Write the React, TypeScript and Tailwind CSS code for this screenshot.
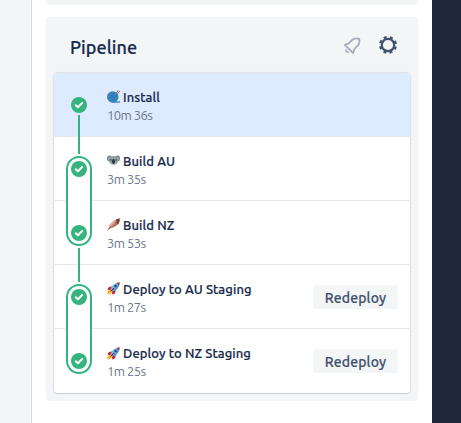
import React from 'react';

type EmojiName = 'yarn' | 'koala' | 'feather' | 'rocket';

function Emoji({ name }: { name: EmojiName }) {
  return (
    <svg viewBox="0 0 26 26" className="h-[13px] w-[13px] shrink-0">
      {name === 'yarn' && (
        <g fill="none" strokeLinecap="round">
          <path d="M17 9 22 1M19 10l6-7" stroke="#a9453f" strokeWidth="1.8" />
          <circle cx="11.5" cy="14" r="11.5" fill="#3b88c3" />
          <path d="M11 24h14" stroke="#3b88c3" strokeWidth="3" />
          <path d="M3 9c6 0 10 4 13 12M7 5c6 1 11 6 13 12M2 17c7-1 11-6 13-12M6 22C12 19 18 15 20 9" stroke="#226699" strokeWidth="1" />
        </g>
      )}
      {name === 'koala' && (
        <g>
          <ellipse cx="5" cy="9" rx="5" ry="6" fill="#78868f" />
          <ellipse cx="21" cy="9" rx="5" ry="6" fill="#78868f" />
          <ellipse cx="4.5" cy="9" rx="2.5" ry="3" fill="#99a4ab" />
          <ellipse cx="21.5" cy="9" rx="2.5" ry="3" fill="#99a4ab" />
          <ellipse cx="13" cy="13" rx="9" ry="9" fill="#909da5" />
          <path d="M8 18h10l-2 4h-6z" fill="#c4cbcf" />
          <ellipse cx="13" cy="15" rx="3" ry="5" fill="#29343b" />
          <circle cx="8" cy="12" r="1.3" fill="#29343b" />
          <circle cx="18" cy="12" r="1.3" fill="#29343b" />
        </g>
      )}
      {name === 'feather' && (
        <g>
          <path d="M3 22C3 12 14 4 25 1c1 10-7 17-19 20Z" fill="#b86d58" />
          <path d="M4 19C5 12 11 8 19 5 17 11 12 17 4 20Z" fill="#f2b9a3" />
          <path d="M1 25C7 16 13 11 22 5" fill="none" stroke="#7d4238" strokeWidth="1.3" />
          <path d="M18 3c3-1 5-2 7-2 1 6-1 10-4 13Z" fill="#793d32" />
        </g>
      )}
      {name === 'rocket' && (
        <g>
          <path d="M1 15c0-5 6-7 11-6l-4 8zM11 25c5 0 7-6 6-11l-8 4z" fill="#c62735" />
          <path d="m9 15-7 2-2 8 8-2 3-6z" fill="#f5b829" />
          <path d="M7 16C8 7 16 1 25 1c0 9-6 16-15 18z" fill="#79b8e8" />
          <path d="M25 1c0 9-6 16-15 18l-2-2z" fill="#5599d0" />
          <path d="M19 2c2-1 4-1 6-1 0 2 0 4-1 6z" fill="#b4323f" />
          <circle cx="17" cy="8" r="2.5" fill="#28496b" />
          <path d="m7 19 7-7" stroke="#a0041e" strokeWidth="2" />
        </g>
      )}
    </svg>
  );
}

function Check() {
  return (
    <svg viewBox="0 0 16 16" className="h-4 w-4 shrink-0">
      <circle cx="8" cy="8" r="8" fill="#36b37e" />
      <path d="m4.8 8.2 2.1 2L11.2 6" fill="none" stroke="#fff" strokeWidth="1.9" strokeLinecap="round" strokeLinejoin="round" />
    </svg>
  );
}

function Group() {
  return (
    <div className="flex h-[90px] w-[26px] flex-col items-center justify-between rounded-full border-2 border-[#36b37e] bg-white py-[3px]">
      <Check />
      <Check />
    </div>
  );
}

interface Step {
  icon: EmojiName;
  name: string;
  time: string;
  redeploy?: boolean;
}

const steps: Step[] = [
  { icon: 'yarn', name: 'Install', time: '10m 36s' },
  { icon: 'koala', name: 'Build AU', time: '3m 35s' },
  { icon: 'feather', name: 'Build NZ', time: '3m 53s' },
  { icon: 'rocket', name: 'Deploy to AU Staging', time: '1m 27s', redeploy: true },
  { icon: 'rocket', name: 'Deploy to NZ Staging', time: '1m 25s', redeploy: true },
];

export default function App() {
  return (
    <div className="flex h-[423px] w-[461px] overflow-hidden bg-white font-['Ubuntu','Noto_Sans',sans-serif]">
      <div className="w-8 shrink-0 border-r border-[#d7d9dd] bg-[#f4f5f7]" />
      <main className="w-[400px] shrink-0 px-3.5">
        <div className="h-[5px] rounded-b bg-[#f4f5f7]" />
        <section className="mt-3 h-96 rounded bg-[#f4f5f7] px-2">
          <header className="flex h-14 items-center pt-1 pr-[13px] pl-4">
            <h2 className="grow text-[18px] leading-6 font-medium tracking-[0.08px] text-[#172b4d] [-webkit-text-stroke:0.2px_#172b4d]">Pipeline</h2>
            <svg viewBox="0 0 18 18" className="mr-[18px] mb-1 h-[18px] w-[18px] fill-none stroke-[#a5adba]" strokeWidth="1.8" strokeLinecap="round" strokeLinejoin="round">
              <path d="M1.8 8.8 10.2 17 11.3 13.2 15.2 9.2C17 7 16.5 4.8 16.2 2.8 13.5 2 11 2.3 9.2 4L5.5 7.6Z" />
              <path d="M3 14.2c.1 1.3.7 1.9 2 2" />
            </svg>
            <svg viewBox="0 0 18 18" className="mb-1 h-[18px] w-[18px] fill-none stroke-[#42526e]">
              <circle cx="9" cy="9" r="6.2" strokeWidth="2.2" />
              <circle cx="9" cy="9" r="7.7" strokeWidth="2.6" strokeDasharray="3 3.048" strokeDashoffset="-1.52" />
            </svg>
          </header>
          <div className="relative h-80 rounded-[3px] bg-white shadow-[0_1px_1px_rgba(9,30,66,0.1),0_0_1px_1px_rgba(9,30,66,0.08)]">
            {steps.map((step, index) => (
              <div key={step.name} className={`flex h-16 items-center pr-3 pl-[53px] ${index === 0 ? 'rounded-t-[3px] bg-[#deebff]' : ''} ${index < 4 ? 'border-b border-[#e6e8ec]' : ''}`}>
                <div className="grow pt-[2px]">
                  <div className="flex h-[18px] items-center gap-[3px] text-[#172b4d]">
                    <Emoji name={step.icon} />
                    <span className="text-[13px] leading-[18px] font-medium tracking-[0.09px] whitespace-nowrap [-webkit-text-stroke:0.2px_#172b4d]">{step.name}</span>
                  </div>
                  <div className="h-[18px] text-[13px] leading-[18px] tracking-[-0.54px] text-[#6b778c]">{step.time}</div>
                </div>
                {step.redeploy && (
                  <button className={`h-6 w-[85px] shrink-0 rounded-[3px] bg-[#f4f5f7] pt-px text-[14px] leading-6 font-medium tracking-[0.15px] text-[#42526e] [-webkit-text-stroke:0.2px_#42526e] ${index === 3 ? 'mt-px' : 'mt-0'}`}>Redeploy</button>
                )}
              </div>
            ))}
            <div className="absolute top-6 left-3 flex w-[26px] flex-col items-center gap-0.5">
              <Check />
              <div className="h-[39px] w-0.5 bg-[#36b37e]" />
              <Group />
              <div className="h-[34px] w-0.5 bg-[#36b37e]" />
              <Group />
            </div>
          </div>
        </section>
      </main>
      <aside className="w-[29px] shrink-0 bg-[#1d2738]" />
    </div>
  );
}
